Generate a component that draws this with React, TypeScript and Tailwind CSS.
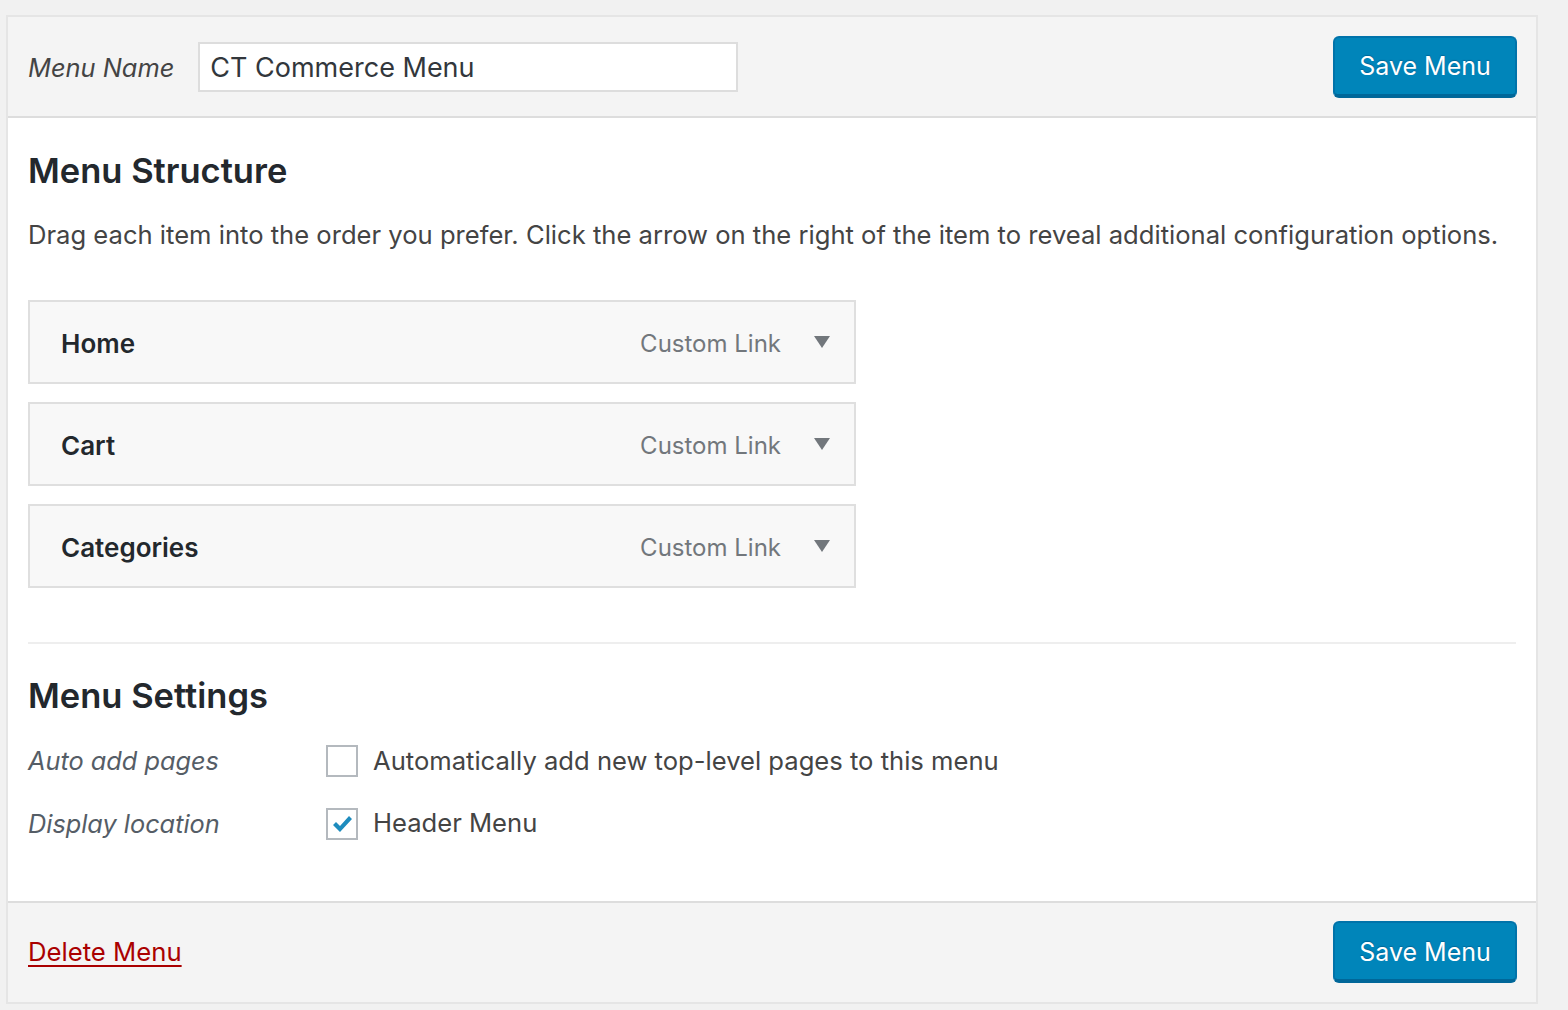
import React from 'react';

const font = { fontFamily: 'Inter, "Noto Sans", sans-serif' };

const SaveButton: React.FC = () => (
  <button className="h-[62px] w-[184px] rounded-[6px] border-2 border-[#0073aa] border-b-[4px] border-b-[#006799] bg-[#0085ba] pt-[2px] text-[25px] text-white [text-shadow:0_-1px_1px_#006799]">
    Save Menu
  </button>
);

const items = ['Home', 'Cart', 'Categories'];

const MenuItem: React.FC<{ title: string }> = ({ title }) => (
  <div className="flex h-[84px] w-[828px] items-center border-2 border-[#dfdfdf] bg-[#f8f8f8] pl-[31px] pr-[24px] pt-[3px]">
    <span className="flex-1 text-[26px] font-semibold text-[#23282d]">{title}</span>
    <span className="mr-[33px] text-[24px] text-[#72777c]">Custom Link</span>
    <svg width="16" height="12" viewBox="0 0 16 12" className="-mt-[3px]">
      <path d="M0 0h16L8 12z" fill="#72777c" />
    </svg>
  </div>
);

export default function App() {
  return (
    <div className="min-h-screen bg-[#f1f1f1] pl-[6px] pt-[15px]" style={font}>
      <div className="w-[1532px] border-2 border-[#e5e5e5] bg-white">
        {/* header */}
        <div className="flex h-[101px] items-center border-b-2 border-[#dddddd] bg-[#f4f4f4] pl-[20px] pr-[19px]">
          <span className="mr-[24px] pt-[4px] text-[25.4px] italic text-[#444]">Menu Name</span>
          <div className="flex h-[50px] w-[540px] items-center border-2 border-[#dddddd] bg-white px-[10px] pt-[4px] text-[27px] text-[#32373c]">
            CT Commerce Menu
          </div>
          <div className="flex-1" />
          <SaveButton />
        </div>

        {/* body */}
        <div className="px-[20px] pb-[58px] pt-[33px]">
          <h2 className="text-[34.5px] font-semibold leading-[40px] text-[#23282d]">Menu Structure</h2>
          <p className="mt-[27px] text-[25.6px] leading-[34px] text-[#444]">
            Drag each item into the order you prefer. Click the arrow on the right of the item to reveal additional configuration options.
          </p>
          <div className="mt-[48px] flex flex-col gap-[18px]">
            {items.map((t) => (
              <MenuItem key={t} title={t} />
            ))}
          </div>

          <div className="mt-[54px] h-[2px] bg-[#eeeeee]" />

          <h2 className="mt-[32px] text-[34.5px] font-semibold leading-[40px] text-[#23282d]">Menu Settings</h2>
          <div className="mt-[26px] flex items-center">
            <span className="w-[298px] text-[25.3px] italic text-[#555d66]">Auto add pages</span>
            <span className="h-[32px] w-[32px] border-2 border-[#b4b9be] bg-white" />
            <span className="ml-[15px] text-[25.6px] text-[#444]">Automatically add new top-level pages to this menu</span>
          </div>
          <div className="mt-[24px] flex items-center">
            <span className="w-[298px] text-[25.3px] italic text-[#555d66]">Display location</span>
            <span className="flex h-[32px] w-[32px] items-center justify-center border-2 border-[#b4b9be] bg-white">
              <svg width="24" height="24" viewBox="0 0 24 24">
                <path d="M3 13l3-3 4 4 9-10 3 3-12 13z" fill="#1e8cbe" />
              </svg>
            </span>
            <span className="ml-[15px] text-[25.6px] text-[#444]">Header Menu</span>
          </div>
        </div>

        {/* footer */}
        <div className="flex h-[101px] items-center border-t-2 border-[#dddddd] bg-[#f4f4f4] pl-[20px] pr-[19px]">
          <a href="#" className="text-[25.7px] text-[#a00] underline underline-offset-[4px]">Delete Menu</a>
          <div className="flex-1" />
          <SaveButton />
        </div>
      </div>
    </div>
  );
}
